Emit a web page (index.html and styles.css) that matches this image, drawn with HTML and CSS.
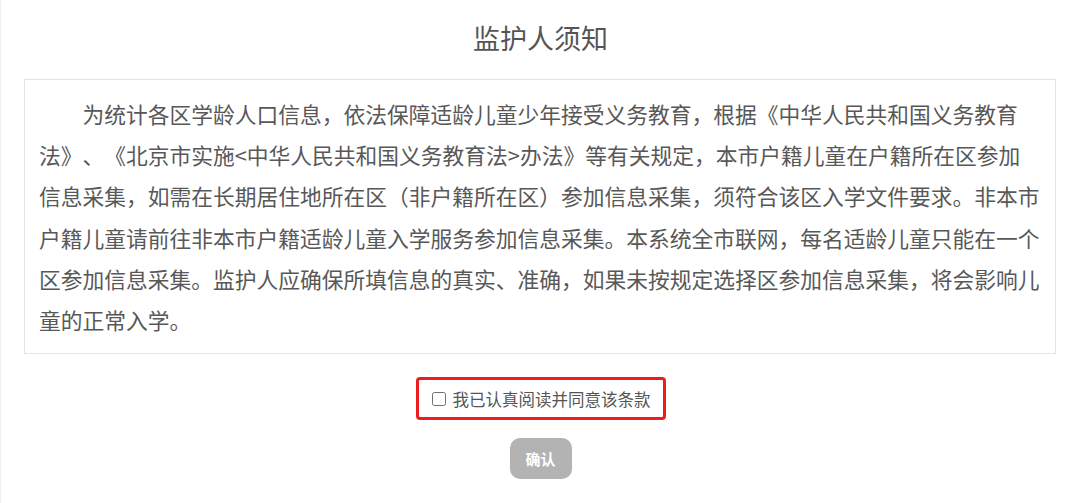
FILE: index.html
```html
<!DOCTYPE html>
<html lang="zh-CN">
<head>
<meta charset="utf-8">
<title>监护人须知</title>
<link rel="stylesheet" href="styles.css">
</head>
<body>
<div class="page">
  <h1 class="title">监护人须知</h1>
  <div class="notice">
    <p>为统计各区学龄人口信息，依法保障适龄儿童少年接受义务教育，根据《中华人民共和国义务教育法》、《北京市实施&lt;中华人民共和国义务教育法&gt;办法》等有关规定，本市户籍儿童在户籍所在区参加<br>信息采集，如需在长期居住地所在区（非户籍所在区）参加信息采集，须符合该区入学文件要求。非本市户籍儿童请前往非本市户籍适龄儿童入学服务参加信息采集。本系统全市联网，每名适龄儿童只能在一个区参加信息采集。监护人应确保所填信息的真实、准确，如果未按规定选择区参加信息采集，将会影响儿童的正常入学。</p>
  </div>
  <div class="agree-row">
    <label class="agree">
      <input type="checkbox" class="check">
      <span>我已认真阅读并同意该条款</span>
    </label>
  </div>
  <div class="btn-row">
    <button class="confirm" type="button">确认</button>
  </div>
</div>
</body>
</html>
```

FILE: styles.css
```css
* { box-sizing: border-box; }
html, body {
  margin: 0;
  padding: 0;
  background: #ffffff;
}
body {
  font-family: "Noto Sans CJK SC", "Noto Sans", "Liberation Sans", sans-serif;
  color: #555555;
  text-spacing-trim: space-all;
}
.page {
  width: 1080px;
  height: 503px;
  overflow: hidden;
  border-left: 1px solid #f0f0f0;
}
.title {
  margin: 0;
  padding-top: 18px;
  height: 79px;
  font-size: 27px;
  line-height: 40px;
  font-weight: 400;
  text-align: center;
  color: #555555;
}
.notice {
  margin: 0 24px 0 23px;
  border: 1px solid #e4e4e4;
  padding: 13px 13px 13px 14px;
}
.notice p {
  margin: 0;
  font-size: 21.75px;
  line-height: 41.2px;
  text-indent: 2em;
  color: #585858;
  text-spacing-trim: space-all;
}
.agree-row {
  display: flex;
  justify-content: center;
  margin-top: 23px;
}
.agree {
  display: flex;
  align-items: center;
  gap: 7px;
  width: 250px;
  height: 43px;
  padding: 0 12px 0 13px;
  border: 3px solid #ee1d1d;
  border-radius: 4px;
  font-size: 16.5px;
  color: #555555;
}
.check {
  appearance: none;
  -webkit-appearance: none;
  margin: 0;
  width: 14px;
  height: 14px;
  border: 1.5px solid #6f6f6f;
  border-radius: 2.5px;
  background: #fff;
  flex: none;
}
.btn-row {
  display: flex;
  justify-content: center;
  margin-top: 18px;
}
.confirm {
  width: 62px;
  height: 41px;
  border: none;
  border-radius: 10px;
  background: #b3b3b3;
  color: #ffffff;
  font-family: "Noto Sans CJK SC", "Noto Sans", sans-serif;
  font-size: 15px;
  font-weight: 700;
  padding: 0;
}
```
